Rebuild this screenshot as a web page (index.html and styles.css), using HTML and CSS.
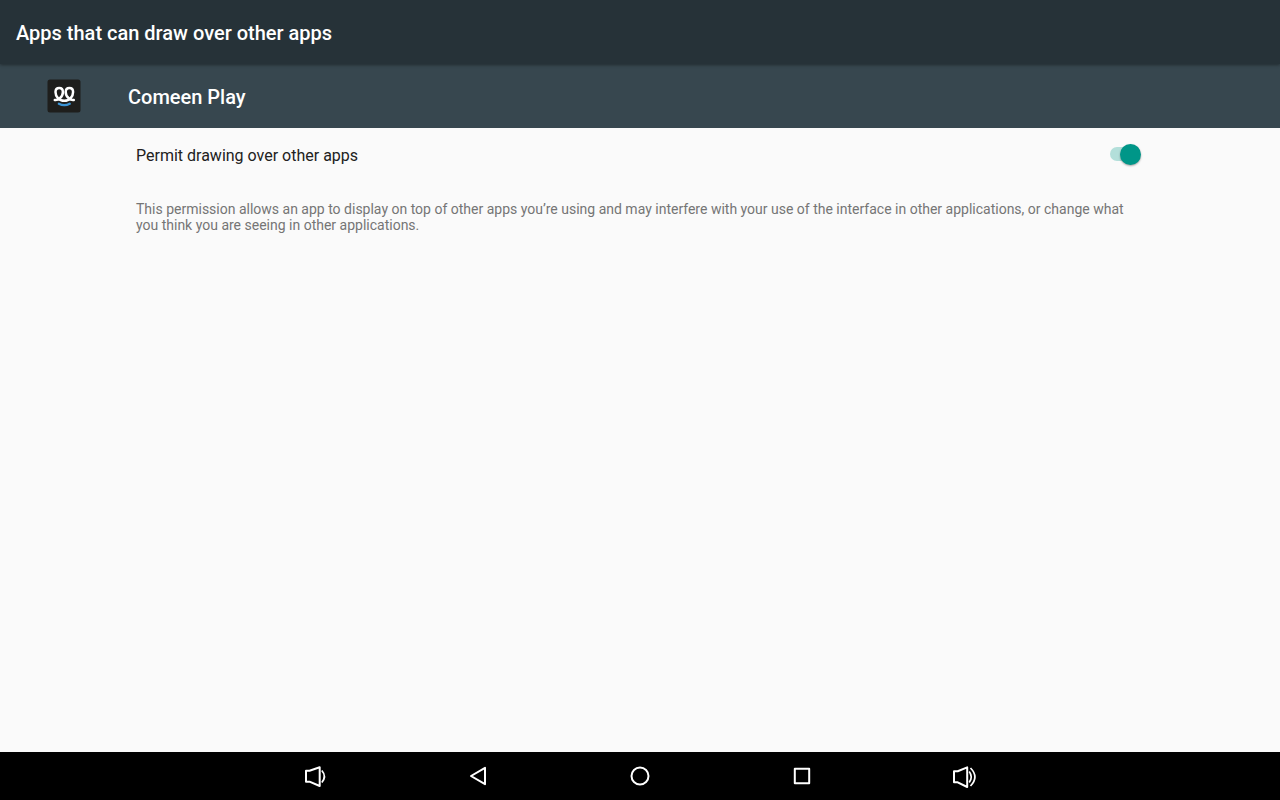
FILE: index.html
```html
<!DOCTYPE html>
<html lang="en">
<head>
    <meta charset="UTF-8">
    <meta name="viewport" content="width=device-width, initial-scale=1.0">
    <title>Apps that can draw over other apps</title>
    <link rel="stylesheet" href="styles.css">
</head>
<body>
    <header class="toolbar">
        <h1>Apps that can draw over other apps</h1>
    </header>

    <div class="app-header">
        <svg class="app-icon" width="34" height="34" viewBox="0 0 34 34" aria-hidden="true">
            <rect x="0.5" y="0.5" width="33" height="33" rx="2.5" fill="#1e1e1c"/>
            <path d="M7.8 21C10.5 21.6 15.9 18.5 15.9 12.9C15.9 10.2 14.3 8.9 12.2 8.9C10 8.9 8.5 10.4 8.5 12.9C8.5 17.4 12 21.8 17.3 21.8C22.6 21.8 26.1 17.4 26.1 12.9C26.1 10.4 24.6 8.9 22.4 8.9C20.3 8.9 18.7 10.2 18.7 12.9C18.7 18.5 24.1 21.6 26.8 21" fill="none" stroke="#fff" stroke-width="2.5" stroke-linecap="round"/>
            <path d="M11.9 24.7Q17.3 27.5 22.7 24.7" fill="none" stroke="#3b94d6" stroke-width="2.4" stroke-linecap="round"/>
        </svg>
        <h2>Comeen Play</h2>
    </div>

    <main class="content">
        <div class="permission">
            <label for="permit">Permit drawing over other apps</label>
            <input type="checkbox" role="switch" id="permit" class="switch" checked>
        </div>
        <p class="description">This permission allows an app to display on top of other apps you’re using and may interfere with your use of the interface in other applications, or change what you think you are seeing in other applications.</p>
    </main>

    <nav class="nav-bar">
        <button type="button" aria-label="Volume down">
            <svg width="32" height="32" viewBox="0 0 32 32">
                <path d="M6 10.7H9.5L19.7 7.2V26L9.5 21.7H6Z"/>
                <path d="M21.8 10.5Q27 16.5 21.8 22.5" stroke-width="1.7"/>
            </svg>
        </button>
        <button type="button" aria-label="Back">
            <svg width="32" height="32" viewBox="0 0 32 32">
                <path d="M9 16L23 7.8V24.2Z"/>
            </svg>
        </button>
        <button type="button" aria-label="Home">
            <svg width="32" height="32" viewBox="0 0 32 32">
                <circle cx="16" cy="16" r="8.5"/>
            </svg>
        </button>
        <button type="button" aria-label="Recent apps">
            <svg width="32" height="32" viewBox="0 0 32 32">
                <rect x="8.8" y="8.8" width="14.4" height="14.4"/>
            </svg>
        </button>
        <button type="button" aria-label="Volume up">
            <svg width="32" height="32" viewBox="0 0 32 32">
                <path d="M6 11.3H9.7L19.2 7.4V27L9.7 22.3H6Z"/>
                <path d="M21.2 11.5Q25.3 17 21.2 22.5M22.5 8Q31.3 17 22.5 26" stroke-width="1.7"/>
            </svg>
        </button>
    </nav>
</body>
</html>
```

FILE: styles.css
```css
* {
    box-sizing: border-box;
}
body {
    font-family: Roboto, sans-serif;
    background-color: #fafafa;
    margin: 0;
    display: flex;
    flex-direction: column;
    min-height: 100vh;
}
h1,
h2 {
    margin: 0;
    color: #fff;
    font-size: 20px;
    font-weight: 500;
    line-height: 24px;
}
.toolbar {
    position: relative;
    padding: 21px 16px 19px;
    background-color: #263238;
    box-shadow: 0 1px 3px rgba(0, 0, 0, 0.4);
}
.app-header {
    display: flex;
    align-items: center;
    gap: 47px;
    padding: 15px 47px;
    background-color: #37474f;
}
.app-header h2 {
    padding-top: 2px;
}
.app-icon {
    display: block;
}
.content {
    flex: 1;
    padding: 16px 136px;
}
.permission {
    display: flex;
    align-items: flex-start;
    justify-content: space-between;
}
.permission label {
    color: #212121;
    font-size: 16px;
    line-height: 24px;
}
.switch {
    appearance: none;
    position: relative;
    width: 34px;
    height: 22px;
    margin: 0;
    cursor: pointer;
}
.switch::before {
    content: "";
    position: absolute;
    top: 3px;
    left: 0;
    width: 28px;
    height: 14px;
    border-radius: 7px;
    background-color: #b3dfda;
}
.switch::after {
    content: "";
    position: absolute;
    top: 0;
    left: 10px;
    width: 21px;
    height: 21px;
    border-radius: 50%;
    background-color: #009688;
    box-shadow: 0 1px 2px rgba(0, 0, 0, 0.35);
}
.switch:not(:checked)::before {
    background-color: #b9b9b9;
}
.switch:not(:checked)::after {
    left: 0;
    background-color: #f1f1f1;
}
.description {
    margin: 33px 0 0;
    color: #757575;
    font-size: 14px;
    line-height: 16px;
}
.nav-bar {
    display: flex;
    justify-content: center;
    background-color: #000;
}
.nav-bar button {
    display: flex;
    justify-content: center;
    width: 162px;
    padding: 8px 0;
    border: none;
    background: none;
    cursor: pointer;
}
.nav-bar svg {
    fill: none;
    stroke: #fff;
    stroke-width: 2;
    stroke-linejoin: round;
}
```
